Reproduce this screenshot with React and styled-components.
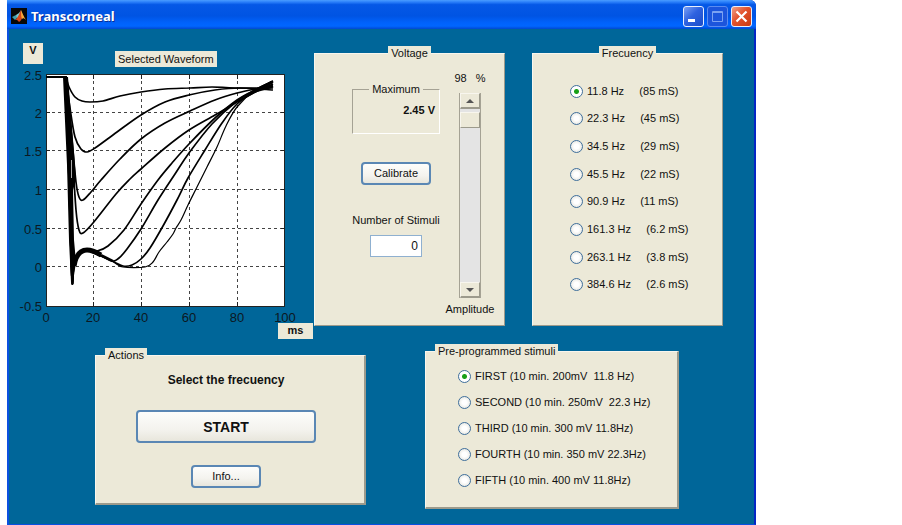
import React, { useState } from 'react';
import styled, { createGlobalStyle, css } from 'styled-components';

const GlobalStyle = createGlobalStyle`
  * {
    box-sizing: border-box;
  }

  body {
    margin: 0;
    background: #fff;
    color: #111;
    font: 11px/15px 'Liberation Sans', Arial, sans-serif;
  }

  button,
  input {
    font: inherit;
    color: inherit;
  }
`;

const Window = styled.main`
  display: flex;
  flex-direction: column;
  min-height: 100vh;
  margin: 0 146px 0 7px;
  border: solid #0a50e0;
  border-width: 0 2px 1px;
  border-right-color: #0426c4;
  border-top-right-radius: 6px;
  background: #006699;
`;

const TitleBar = styled.header`
  display: flex;
  align-items: center;
  gap: 4px;
  height: 29px;
  margin: 0 -2px;
  padding: 3px 4px 0;
  border-top-right-radius: 6px;
  background: linear-gradient(
    #4a9cff 0%,
    #2b80fa 7%,
    #0558e6 16%,
    #0054e3 55%,
    #0062fb 78%,
    #0066ff 90%,
    #0048d0 100%
  );

  h1 {
    flex: 1;
    margin: 0;
    color: #fff;
    font: bold 13px/16px 'Noto Sans', 'Open Sans', sans-serif;
    text-shadow: 1px 1px #0a2f93;
  }
`;

const CaptionButtons = styled.div`
  display: flex;
  gap: 3px;
`;

const CaptionButton = styled.button`
  display: grid;
  width: 21px;
  height: 21px;
  padding: 0;
  place-items: center;
  border: 1px solid ${props => (props.$dim ? '#5c8cf0' : '#e8eefc')};
  border-radius: 3px;
  background: ${props =>
    props.$close
      ? 'linear-gradient(135deg, #f0a088, #e2512c 45%, #c83a10)'
      : props.$dim
        ? '#1c55dc'
        : 'linear-gradient(135deg, #7aa0f4, #2e62e0 45%, #1c4cc8)'};
`;

const Client = styled.div`
  display: flex;
  flex-direction: column;
  gap: 5px;
  padding: 14px 0;
`;

const TopRow = styled.div`
  display: grid;
  grid-template-columns: 304fr 409fr;
  gap: 1px;
  padding-right: 31px;
`;

const PlotColumn = styled.section`
  display: flex;
  flex-direction: column;
`;

const PlotHeader = styled.div`
  display: flex;
  align-items: flex-start;
  gap: 72px;
  height: 24px;
  padding-left: 14px;
`;

const Tag = styled.span`
  padding: 0 3px;
  background: #ece9d8;
  text-align: center;
  white-space: nowrap;
`;

const AxisTag = styled(Tag)`
  min-width: ${props => props.$width}px;
  height: ${props => props.$height}px;
  font-weight: bold;
`;

// tucked up against the tick labels under the plot
const TimeTag = styled(AxisTag)`
  align-self: flex-end;
  margin-top: -4px;
  z-index: 1;
`;

const PlotTitle = styled(Tag)`
  align-self: flex-end;
  line-height: 16px;
`;

const Chart = styled.svg`
  display: block;
  width: 100%;

  text {
    fill: #0c1822;
    font-size: 13px;
  }
`;

const Panels = styled.div`
  display: grid;
  grid-template-columns: 1fr 1fr;
  gap: 27px;
  padding: 3px 0 13px;
`;

const BottomRow = styled.div`
  display: grid;
  grid-template-columns: 271fr 254fr;
  align-items: center;
  gap: 59px;
  padding: 0 75px 0 86px;
`;

const raised = css`
  border: 1px solid #f8f6ee;
  border-right-color: #9c9a8c;
  border-bottom-color: #9c9a8c;
`;

const Panel = styled.fieldset`
  display: flex;
  flex-direction: column;
  min-width: 0;
  margin: 0;
  padding: 0;
  ${raised}
  border-right-width: ${props => props.$edge || 1}px;
  border-bottom-width: ${props => props.$edge || 1}px;
  background: #ece9d8;
`;

const Legend = styled.legend`
  margin: ${props => (props.$center ? '0 auto' : '0 9px')};
  padding: 0 3px;
  background: #ece9d8;
  white-space: nowrap;
`;

const VoltageBody = styled.div`
  display: grid;
  grid-template-columns: 1fr 50px;
  gap: 5px;
  padding: 10px 9px 8px 37px;
`;

const VoltageControls = styled.div`
  display: flex;
  flex-direction: column;
  align-items: center;
  gap: 28px;
  padding-top: 11px;
`;

const Readout = styled.fieldset`
  width: 100%;
  height: 52px;
  margin: 0;
  padding: 6px 4px 0;
  border: 1px solid #a5a294;
  border-right-color: #fff;
  border-bottom-color: #fff;
  font-weight: bold;
  text-align: right;

  legend {
    margin: 0 auto;
    padding: 0 3px;
    font-weight: normal;
  }
`;

const Button = styled.button`
  width: ${props => props.$width}px;
  height: ${props => props.$height || 23}px;
  padding: 0;
  border: 2px solid #5a87b4;
  border-radius: 4px;
  background: linear-gradient(#fdfdfb, #f4f3ee 60%, #e8e6dc);
  font: ${props =>
    props.$big ? "bold 14px/18px 'Liberation Sans', sans-serif" : 'inherit'};
`;

const Field = styled.label`
  display: flex;
  flex-direction: column;
  align-items: center;
  gap: 7px;
  white-space: nowrap;

  input {
    width: 52px;
    height: 22px;
    padding: 0 3px;
    border: 1px solid #8fb0d0;
    background: #fff;
    font-size: 12px;
    text-align: right;
  }
`;

const AmplitudeColumn = styled.div`
  display: flex;
  flex-direction: column;
  align-items: center;

  output {
    white-space: pre;
  }
`;

const ScrollBar = styled.div`
  display: flex;
  flex-direction: column;
  width: 22px;
  height: 205px;
  margin: 7px 0 4px;
  border: 1px solid #a5a294;
  border-width: 0 1px;
  background: #e4e4e4;

  button {
    display: grid;
    height: 16px;
    padding: 0;
    place-items: center;
    ${raised}
    border-bottom-width: 2px;
    background: #ece9d8;
  }

  input {
    flex: 1;
    width: 20px;
    min-height: 0;
    margin: 0;
    appearance: none;
    background: transparent;
    direction: rtl;
    writing-mode: vertical-lr;
  }

  input::-webkit-slider-thumb {
    width: 20px;
    height: 16px;
    appearance: none;
    ${raised}
    background: #ece9d8;
  }
`;

const RadioList = styled.div`
  display: flex;
  flex: 1;
  flex-direction: column;
  justify-content: space-between;
  gap: 10px;
  padding: ${props => props.$padding};
`;

const Radio = styled.label`
  display: flex;
  align-items: center;
  gap: 4px;
  height: 16px;
  white-space: pre;

  input {
    width: 13px;
    height: 13px;
    margin: 0;
    appearance: none;
    border: 1px solid #3f6f9c;
    border-radius: 50%;
    background: radial-gradient(#fff 30%, #dcdcd4);
  }

  input:checked {
    background: radial-gradient(#18a018 0 2px, #fff 3px);
  }
`;

const ActionsBody = styled.div`
  display: flex;
  flex-direction: column;
  align-items: center;
  gap: 22px;
  padding: 10px 8px 15px 0;

  p {
    margin: 0;
    font-size: 12px;
    font-weight: bold;
  }
`;

const frequencies = [
  '11.8 Hz     (85 mS)',
  '22.3 Hz     (45 mS)',
  '34.5 Hz     (29 mS)',
  '45.5 Hz     (22 mS)',
  '90.9 Hz     (11 mS)',
  '161.3 Hz     (6.2 mS)',
  '263.1 Hz     (3.8 mS)',
  '384.6 Hz     (2.6 mS)',
];

const programs = [
  'FIRST (10 min. 200mV  11.8 Hz)',
  'SECOND (10 min. 250mV  22.3 Hz)',
  'THIRD (10 min. 300 mV 11.8Hz)',
  'FOURTH (10 min. 350 mV 22.3Hz)',
  'FIFTH (10 min. 400 mV 11.8Hz)',
];

const xTicks = [
  [46, '0'],
  [93, '20'],
  [141, '40'],
  [189, '60'],
  [237, '80'],
  [285, '100'],
];

const yTicks = [
  [75, '2.5'],
  [113, '2'],
  [151, '1.5'],
  [190, '1'],
  [229, '0.5'],
  [267, '0'],
  [306, '-0.5'],
];

// every strong curve drops to the same undershoot before it recovers
const dip = [[66, 77], [69, 180], [72, 280], [74, 263], [79, 253], [86, 250]];

const curves = [
  [[66, 77], [69, 87], [75, 97], [82, 101], [90, 102], [103, 101], [120, 96], [141, 92], [165, 89], [190, 88], [212, 87], [235, 88], [273, 88]],
  [[66, 77], [70, 108], [75, 137], [81, 149], [87, 152], [95, 148], [117, 132], [141, 115], [165, 102], [189, 95], [215, 90], [240, 88], [273, 90]],
  [[66, 77], [72, 140], [76, 182], [79, 197], [83, 200], [91, 192], [101, 180], [120, 159], [141, 139], [165, 123], [190, 111], [215, 100], [237, 93], [255, 89], [273, 86]],
  [[66, 77], [72, 150], [76, 210], [79, 230], [83, 233], [93, 223], [116, 194], [130, 179], [141, 169], [165, 148], [189, 130], [215, 115], [237, 102], [255, 92], [273, 84]],
  [...dip, [97, 251], [108, 246], [124, 230], [141, 204], [158, 180], [172, 163], [189, 144], [215, 118], [237, 100], [255, 90], [273, 82]],
  [...dip, [96, 253], [112, 261], [119, 258], [127, 249], [141, 229], [158, 200], [175, 174], [189, 153], [212, 124], [237, 101], [255, 90], [273, 81]],
  [...dip, [96, 254], [112, 261], [123, 266], [132, 265], [141, 259], [150, 248], [163, 226], [177, 200], [188, 178], [205, 150], [222, 123], [237, 104], [255, 91], [273, 82]],
];

const slowest = [...dip, [96, 254], [112, 261], [123, 267], [145, 267], [153, 262], [159, 252], [167, 242], [173, 234], [176, 228], [181, 220], [188, 205], [197, 187], [207, 167], [217, 147], [226, 126], [237, 107], [255, 90], [273, 81]];

function toPath(points) {
  const at = i => points[Math.max(0, Math.min(points.length - 1, i))];
  let d = `M46 77L${points[0]}`;
  for (let i = 0; i < points.length - 1; i++) {
    const [p0, p1, p2, p3] = [at(i - 1), at(i), at(i + 1), at(i + 2)];
    const c1 = [p1[0] + (p2[0] - p0[0]) / 6, p1[1] + (p2[1] - p0[1]) / 6];
    const c2 = [p2[0] - (p3[0] - p1[0]) / 6, p2[1] - (p3[1] - p1[1]) / 6];
    d += `C${c1} ${c2} ${p2}`;
  }
  return d;
}

function Waveform() {
  return (
    <Chart viewBox="9 67 304 260" role="img" aria-label="Selected Waveform">
      <rect x="46" y="75" width="239" height="231" fill="#fff" />
      <g stroke="#444" strokeDasharray="3 3" shapeRendering="crispEdges">
        {xTicks.slice(1, -1).map(([x]) => (
          <path key={x} d={`M${x + 0.5} 75V306`} />
        ))}
        {yTicks.slice(1, -1).map(([y]) => (
          <path key={y} d={`M46 ${y - 0.5}H285`} />
        ))}
      </g>
      <path
        d="M46.5 74.5H284.5V306.5H46.5Z"
        fill="none"
        stroke="#222"
        shapeRendering="crispEdges"
      />
      <path
        d={xTicks.slice(1, -1).map(([x]) => `M${x + 0.5} 306v-4M${x + 0.5} 75v4`).join('') +
          yTicks.slice(1, -1).map(([y]) => `M46 ${y - 0.5}h4M285 ${y - 0.5}h-4`).join('')}
        stroke="#222"
      />
      <g fill="none" stroke="#000" strokeWidth="1.7" strokeLinejoin="round">
        {curves.map((points, i) => (
          <path key={i} d={toPath(points)} />
        ))}
        <path d={toPath(slowest)} strokeWidth="1.2" />
        <path d="M74 266C76 254 81 250 87 250S96 252 101 255" strokeWidth="5" />
        <path d="M101 255L113 261" strokeWidth="2.4" />
        <path d="M255 91L273 86" strokeWidth="3" />
        <path d="M245 97L272 82" strokeWidth="3" />
      </g>
      <path d="M63 77H68L71 115L74 152L76 180L73 190L74 240L76 262L73 282H71L69 240L67 165Z" />
      <path d="M71.5 160V178" stroke="#aaa" />
      {xTicks.map(([x, label]) => (
        <text key={label} x={x} y="322" textAnchor="middle">
          {label}
        </text>
      ))}
      {yTicks.map(([y, label]) => (
        <text key={label} x="42" y={y + 5} textAnchor="end">
          {label}
        </text>
      ))}
    </Chart>
  );
}

function Logo() {
  return (
    <svg width="16" height="16" viewBox="0 0 16 16" aria-hidden="true">
      <path d="M0 0H16V16H0Z" fill="#080808" />
      <path d="M1 9L5 7L7 9L4 12Z" fill="#3f9fae" />
      <path d="M5 7L8 5L10 2L8 9L6 10Z" fill="#7ccbd0" />
      <path d="M10 2C8 6 7 10 4 12C6 11 7 13 8 14C10 13 11 10 12 9Z" fill="#d8481c" />
      <path d="M10 2C11 4 13 9 15 12C13 10 12 10 11 11C10 9 10 6 10 2Z" fill="#f8a838" />
    </svg>
  );
}

function RadioGroup({ name, options, padding }) {
  return (
    <RadioList $padding={padding}>
      {options.map((option, i) => (
        <Radio key={option}>
          <input type="radio" name={name} defaultChecked={i === 0} />
          {option}
        </Radio>
      ))}
    </RadioList>
  );
}

function App() {
  const [amplitude, setAmplitude] = useState(98);

  const step = delta => {
    setAmplitude(Math.max(0, Math.min(100, amplitude + delta)));
  };

  return (
    <>
      <GlobalStyle />
      <Window>
        <TitleBar>
          <Logo />
          <h1>Transcorneal</h1>
          <CaptionButtons>
            <CaptionButton aria-label="Minimize">
              <svg width="19" height="19">
                <path d="M4 12H11V15H4Z" fill="#fff" />
              </svg>
            </CaptionButton>
            <CaptionButton $dim aria-label="Maximize" disabled>
              <svg width="19" height="19" fill="none" stroke="#7ba2f2">
                <path d="M4.5 4.5H14.5V14.5H4.5ZM4 5.5H15" />
              </svg>
            </CaptionButton>
            <CaptionButton $close aria-label="Close">
              <svg width="19" height="19" stroke="#fff" strokeWidth="2.2">
                <path d="M4.5 4.5L14.5 14.5M14.5 4.5L4.5 14.5" />
              </svg>
            </CaptionButton>
          </CaptionButtons>
        </TitleBar>

        <Client>
          <TopRow>
            <PlotColumn>
              <PlotHeader>
                <AxisTag $width={20} $height={21}>
                  V
                </AxisTag>
                <PlotTitle>Selected Waveform</PlotTitle>
              </PlotHeader>
              <Waveform />
              <TimeTag $width={35} $height={16}>
                ms
              </TimeTag>
            </PlotColumn>

            <Panels>
              <Panel>
                <Legend $center>Voltage</Legend>
                <VoltageBody>
                  <VoltageControls>
                    <Readout>
                      <legend>Maximum</legend>
                      2.45 V
                    </Readout>
                    <Button $width={70}>Calibrate</Button>
                    <Field>
                      Number of Stimuli
                      <input type="text" defaultValue="0" />
                    </Field>
                  </VoltageControls>
                  <AmplitudeColumn>
                    <output htmlFor="amplitude">{amplitude}   %</output>
                    <ScrollBar>
                      <button aria-label="Increase" onClick={() => step(1)}>
                        <svg width="8" height="4">
                          <path d="M4 0L8 4H0Z" fill="#555" />
                        </svg>
                      </button>
                      <input
                        id="amplitude"
                        type="range"
                        value={amplitude}
                        onChange={e => setAmplitude(Number(e.target.value))}
                      />
                      <button aria-label="Decrease" onClick={() => step(-1)}>
                        <svg width="8" height="4">
                          <path d="M0 0H8L4 4Z" fill="#555" />
                        </svg>
                      </button>
                    </ScrollBar>
                    <label htmlFor="amplitude">Amplitude</label>
                  </AmplitudeColumn>
                </VoltageBody>
              </Panel>

              <Panel>
                <Legend $center>Frecuency</Legend>
                <RadioGroup
                  name="frequency"
                  options={frequencies}
                  padding="22px 0 32px 37px"
                />
              </Panel>
            </Panels>
          </TopRow>

          <BottomRow>
            <Panel $edge={2}>
              <Legend>Actions</Legend>
              <ActionsBody>
                <p>Select the frecuency</p>
                <Button $width={180} $height={33} $big>
                  START
                </Button>
                <Button $width={70}>Info...</Button>
              </ActionsBody>
            </Panel>

            <Panel $edge={2}>
              <Legend>Pre-programmed stimuli</Legend>
              <RadioGroup
                name="program"
                options={programs}
                padding="9px 0 19px 32px"
              />
            </Panel>
          </BottomRow>
        </Client>
      </Window>
    </>
  );
}

export default App;
